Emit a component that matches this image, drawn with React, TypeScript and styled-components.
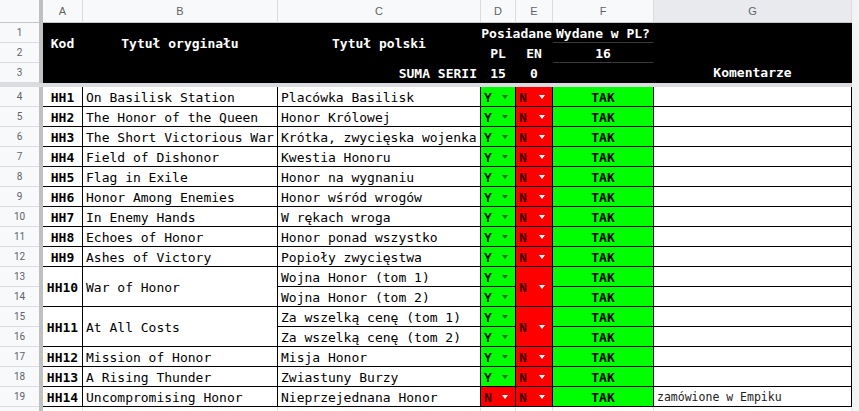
import React from "react";
import styled, { createGlobalStyle } from "styled-components";

const MONO = `"DejaVu Sans Mono", "Liberation Mono", monospace`;

const GlobalStyle = createGlobalStyle`
	html, body {
		margin: 0;
		padding: 0;
		background: #fff;
		overflow: hidden;
	}
`;

const Sheet = styled.div`
	display: grid;
	grid-template-columns: 39px 4px 40px 195px 203px 35px 37px 101px 198px 1fr;
	grid-template-rows: 23px 20px 20px 20px 4px repeat(17, 20px);
	width: 859px;
	height: 411px;
	overflow: hidden;
	background: #fff;
	font-family: ${MONO};
	font-size: 13px;
	color: #000;
`;

const Corner = styled.div`
	background: #f8f9fa;
	border-bottom: 1px solid #c4c7c5;
	box-sizing: border-box;
`;

const ColHead = styled.div<{ $selected?: boolean }>`
	box-sizing: border-box;
	display: flex;
	align-items: center;
	justify-content: center;
	background: ${(p) => (p.$selected ? "#e8eaed" : "#f8f9fa")};
	border-right: 1px solid #dadce0;
	border-bottom: 1px solid #c4c7c5;
	color: #5f6368;
	font-family: "Liberation Sans", Arial, sans-serif;
	font-size: 11px;
`;

const RowHead = styled.div`
	box-sizing: border-box;
	display: flex;
	align-items: center;
	justify-content: center;
	background: #f8f9fa;
	border-bottom: 1px solid #dadce0;
	color: #5f6368;
	font-family: Roboto, "Liberation Sans", sans-serif;
	font-size: 10px;
`;

const VDivider = styled.div`
	grid-column: 2;
	grid-row: 1 / -1;
	background: #c0c0c0;
`;

const HDivider = styled.div`
	grid-column: 1 / 10;
	grid-row: 5;
	background: #dadce0;
`;

const Gutter = styled.div`
	grid-column: 10;
	grid-row: 1 / -1;
	background: #f3f3f3;
`;

type Align = "left" | "center" | "right";
const justify = (a?: Align) =>
	a === "center" ? "center" : a === "right" ? "flex-end" : "flex-start";

const HeadCell = styled.div<{
	$rows?: number;
	$cols?: number;
	$align?: Align;
	$bottom?: boolean;
	$line?: boolean;
}>`
	grid-row: span ${(p) => p.$rows ?? 1};
	grid-column: span ${(p) => p.$cols ?? 1};
	box-sizing: border-box;
	display: flex;
	align-items: ${(p) => (p.$bottom ? "flex-end" : "center")};
	justify-content: ${(p) => justify(p.$align)};
	padding: 1px 3px 0;
	line-height: 19px;
	background: #000;
	color: #fff;
	font-weight: 700;
	white-space: nowrap;
	border-right: 1px solid #000;
	border-bottom: 1px solid ${(p) => (p.$line ? "#3a3a3a" : "#000")};
`;

const Cell = styled.div<{ $rows?: number; $bold?: boolean; $align?: Align; $small?: boolean }>`
	grid-row: span ${(p) => p.$rows ?? 1};
	box-sizing: border-box;
	display: flex;
	align-items: center;
	justify-content: ${(p) => justify(p.$align)};
	padding: 1px 3px 0;
	background: #fff;
	border-right: 1px solid #000;
	border-bottom: 1px solid #000;
	font-weight: ${(p) => (p.$bold ? 700 : 400)};
	font-size: ${(p) => (p.$small ? "11.5px" : "13px")};
	color: ${(p) => (p.$small ? "#222" : "#000")};
	white-space: nowrap;
	overflow: hidden;
`;

const Choice = styled(Cell)<{ $yes: boolean }>`
	justify-content: space-between;
	padding: 1px 7px 0 3px;
	background: ${(p) => (p.$yes ? "#00ff00" : "#ff0000")};
	font-weight: 700;
	color: ${(p) => (p.$yes ? "#111" : "#3a0000")};
`;

const Arrow = styled.span<{ $yes: boolean }>`
	width: 0;
	height: 0;
	border-left: 3.5px solid transparent;
	border-right: 3.5px solid transparent;
	border-top: 4px solid ${(p) => (p.$yes ? "#2a6e2a" : "#ffffff")};
`;

const Status = styled(Cell)`
	justify-content: center;
	background: #00ff00;
	font-weight: 700;
`;

const Blank = styled.div`
	border-right: 1px solid #e2e2e2;
	border-bottom: 1px solid #e2e2e2;
	box-sizing: border-box;
`;

type Book = {
	code: string;
	original: string;
	polish: string[];
	pl: boolean;
	note?: string;
};

const books: Book[] = [
	{ code: "HH1", original: "On Basilisk Station", polish: ["Placówka Basilisk"], pl: true },
	{ code: "HH2", original: "The Honor of the Queen", polish: ["Honor Królowej"], pl: true },
	{ code: "HH3", original: "The Short Victorious War", polish: ["Krótka, zwycięska wojenka"], pl: true },
	{ code: "HH4", original: "Field of Dishonor", polish: ["Kwestia Honoru"], pl: true },
	{ code: "HH5", original: "Flag in Exile", polish: ["Honor na wygnaniu"], pl: true },
	{ code: "HH6", original: "Honor Among Enemies", polish: ["Honor wśród wrogów"], pl: true },
	{ code: "HH7", original: "In Enemy Hands", polish: ["W rękach wroga"], pl: true },
	{ code: "HH8", original: "Echoes of Honor", polish: ["Honor ponad wszystko"], pl: true },
	{ code: "HH9", original: "Ashes of Victory", polish: ["Popioły zwycięstwa"], pl: true },
	{ code: "HH10", original: "War of Honor", polish: ["Wojna Honor (tom 1)", "Wojna Honor (tom 2)"], pl: true },
	{ code: "HH11", original: "At All Costs", polish: ["Za wszelką cenę (tom 1)", "Za wszelką cenę (tom 2)"], pl: true },
	{ code: "HH12", original: "Mission of Honor", polish: ["Misja Honor"], pl: true },
	{ code: "HH13", original: "A Rising Thunder", polish: ["Zwiastuny Burzy"], pl: true },
	{ code: "HH14", original: "Uncompromising Honor", polish: ["Nieprzejednana Honor"], pl: false, note: "zamówione w Empiku" },
];

const Dropdown = ({ yes, rows }: { yes: boolean; rows?: number }) => (
	<Choice $yes={yes} $rows={rows}>
		<span>{yes ? "Y" : "N"}</span>
		<Arrow $yes={yes} />
	</Choice>
);

const App = () => {
	let rowNo = 3;
	const body: React.ReactNode[] = [];
	books.forEach((b) => {
		const span = b.polish.length;
		b.polish.forEach((title, i) => {
			rowNo += 1;
			body.push(<RowHead key={`r${rowNo}`}>{rowNo}</RowHead>);
			if (i === 0) {
				body.push(
					<Cell key={`a${rowNo}`} $rows={span} $bold $align="center">
						{b.code}
					</Cell>,
					<Cell key={`b${rowNo}`} $rows={span}>
						{b.original}
					</Cell>
				);
			}
			body.push(<Cell key={`c${rowNo}`}>{title}</Cell>);
			body.push(<Dropdown key={`d${rowNo}`} yes={b.pl} />);
			if (i === 0) body.push(<Dropdown key={`e${rowNo}`} yes={false} rows={span} />);
			body.push(<Status key={`f${rowNo}`}>TAK</Status>);
			body.push(
				<Cell key={`g${rowNo}`} $small>
					{b.note ?? ""}
				</Cell>
			);
		});
	});

	return (
		<>
			<GlobalStyle />
			<Sheet>
				<VDivider />
				<Gutter />
				<HDivider />

				<Corner />
				{["A", "B", "C", "D", "E", "F", "G"].map((l) => (
					<ColHead key={l} $selected={l === "G"}>
						{l}
					</ColHead>
				))}

				<RowHead>1</RowHead>
				<HeadCell $rows={2} $align="center">
					Kod
				</HeadCell>
				<HeadCell $rows={2} $align="center">
					Tytuł oryginału
				</HeadCell>
				<HeadCell $rows={2} $align="center">
					Tytuł polski
				</HeadCell>
				<HeadCell $cols={2} $align="center">
					Posiadane
				</HeadCell>
				<HeadCell $align="center" $line>
					Wydane w PL?
				</HeadCell>
				<HeadCell $rows={3} $align="center" $bottom>
					Komentarze
				</HeadCell>

				<RowHead>2</RowHead>
				<HeadCell $align="center">PL</HeadCell>
				<HeadCell $align="center">EN</HeadCell>
				<HeadCell $align="center" $line>
					16
				</HeadCell>

				<RowHead>3</RowHead>
				<HeadCell />
				<HeadCell />
				<HeadCell $align="right">SUMA SERII</HeadCell>
				<HeadCell $align="center">15</HeadCell>
				<HeadCell $align="center">0</HeadCell>
				<HeadCell />

				{body}

				<RowHead />
				{Array.from({ length: 7 }).map((_, i) => (
					<Blank key={`x${i}`} />
				))}
			</Sheet>
		</>
	);
};

export default App;
